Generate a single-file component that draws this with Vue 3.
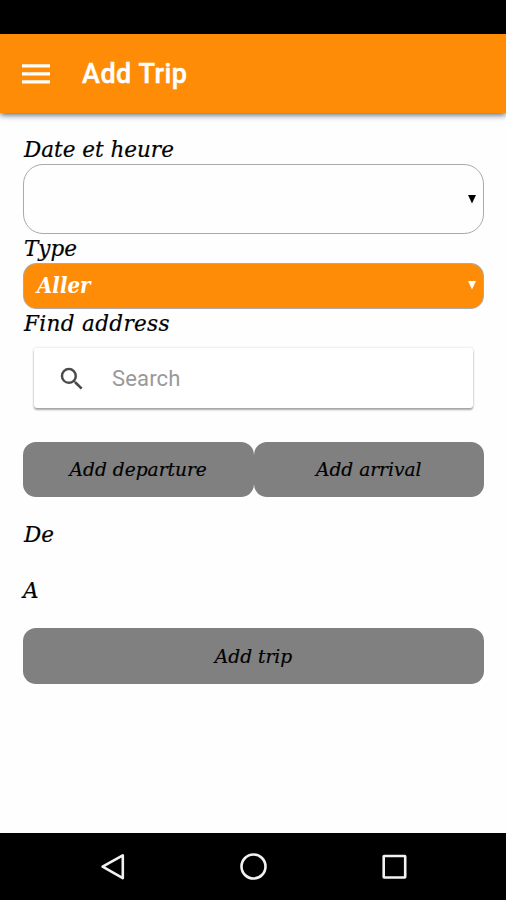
<script setup>
import { ref } from 'vue'

const type = ref('Aller')
</script>

<template>
  <div class="screen">
    <div class="status"></div>
    <header class="toolbar">
      <svg class="menu" width="28" height="20" viewBox="0 0 28 20">
        <path d="M0 1.8h28M0 9.8h28M0 17.8h28" stroke="#fff" stroke-width="3.2" />
      </svg>
      <h1>Add Trip</h1>
    </header>

    <main class="form">
      <label class="date-label">Date et heure</label>
      <div class="select date">
        <svg class="arrow" width="8" height="9" viewBox="0 0 8 9"><path d="M0 0h8L4 8.5z" fill="currentColor" /></svg>
      </div>
      <label class="type-label">Type</label>
      <div class="select type">
        <span>{{ type }}</span>
        <svg class="arrow" width="8" height="9" viewBox="0 0 8 9"><path d="M0 0h8L4 8.5z" fill="currentColor" /></svg>
      </div>
      <label class="find-label">Find address</label>
      <div class="search">
        <svg width="30" height="30" viewBox="0 0 24 24">
          <path fill="#4a4a4a" d="M15.5 14h-.79l-.28-.27A6.47 6.47 0 0 0 16 9.5 6.5 6.5 0 1 0 9.5 16c1.61 0 3.09-.59 4.23-1.57l.27.28v.79l5 4.99L20.49 19l-4.99-5zm-6 0C7.01 14 5 11.99 5 9.5S7.01 5 9.5 5 14 7.01 14 9.5 11.99 14 9.5 14z" />
        </svg>
        <span>Search</span>
      </div>
      <div class="buttons">
        <button class="departure">Add departure</button>
        <button class="arrival">Add arrival</button>
      </div>
      <p class="from">De</p>
      <p class="to">A</p>
      <button class="submit">Add trip</button>
    </main>

    <nav class="nav">
      <svg width="28" height="28" viewBox="0 0 28 28"><path d="M23.8 2.3v22.8L3.6 13.7z" /></svg>
      <svg width="28" height="28" viewBox="0 0 28 28"><circle cx="14.5" cy="13.5" r="12" /></svg>
      <svg width="28" height="28" viewBox="0 0 28 28"><rect x="3.7" y="3" width="21.5" height="21.5" rx=".5" /></svg>
    </nav>
  </div>
</template>

<style>
body {
  margin: 0;
  background: #fff;
}
</style>

<style scoped>
.screen {
  display: flex;
  flex-direction: column;
  width: 506px;
  height: 900px;
  overflow: hidden;
  background: #fefefe;
  color: #000;
  font-family: "DejaVu Serif", serif;
  font-style: italic;
}
.status {
  height: 34px;
  background: #000;
}
.toolbar {
  display: flex;
  align-items: center;
  height: 79px;
  padding-left: 22px;
  box-sizing: border-box;
  gap: 32px;
  background: #ff8c06;
  box-shadow: 0 2px 6px rgba(0, 20, 40, .65);
}
h1 {
  margin: 0;
  color: #fff;
  font: 500 27px/32px Roboto, sans-serif;
  letter-spacing: .5px;
  -webkit-text-stroke: .4px #fff;
}
.form {
  display: flex;
  flex: 1;
  flex-direction: column;
  padding: 22px 22px 0 23px;
}
label,
p {
  margin: 0;
  height: 29px;
  padding-left: 1px;
  font-size: 21.5px;
  line-height: 30px;
  white-space: nowrap;
  -webkit-text-stroke: .2px #000;
}
.find-label {
  letter-spacing: .35px;
}
.select {
  display: flex;
  align-items: center;
  box-sizing: border-box;
  border: 1px solid #aaa;
}
.arrow {
  margin-left: auto;
}
.date {
  height: 70px;
  padding-right: 7px;
  border-radius: 20px;
}
.type {
  height: 46px;
  padding: 0 7px 2px 13px;
  border-radius: 13px;
  background: #ff8c06;
  color: #fff;
  font-family: "DejaVu Serif Condensed", "DejaVu Serif", serif;
  font-size: 22px;
  font-stretch: condensed;
  font-weight: 700;
}
.search {
  display: flex;
  align-items: center;
  gap: 25px;
  height: 60px;
  box-sizing: border-box;
  margin: 10px 11px 34px 11px;
  padding: 2px 0 0 23px;
  border-radius: 3px;
  background: #fff;
  box-shadow: 0 2px 2px rgba(0, 0, 0, .32), 0 0 3px rgba(0, 0, 0, .15);
  color: #999;
  font: 400 22px/30px Roboto, sans-serif;
  letter-spacing: .15px;
}
.buttons {
  display: grid;
  grid-template-columns: 1fr 1fr;
}
button {
  height: 55px;
  padding: 0 0 1px;
  border: 0;
  border-radius: 13px;
  background: #808080;
  color: #000;
  font: inherit;
  font-size: 18.6px;
  -webkit-text-stroke: .2px #000;
}
.from {
  margin: 23px 0 27px;
}
.to {
  margin-bottom: 23px;
  padding-left: 0;
}
.submit {
  height: 56px;
  padding-bottom: 0;
}
.nav {
  display: flex;
  justify-content: center;
  align-items: center;
  gap: 112.5px;
  height: 67px;
  background: #000;
}
.nav svg {
  fill: none;
  stroke: #f2f2f2;
  stroke-width: 2.6;
  stroke-linejoin: round;
}
</style>
